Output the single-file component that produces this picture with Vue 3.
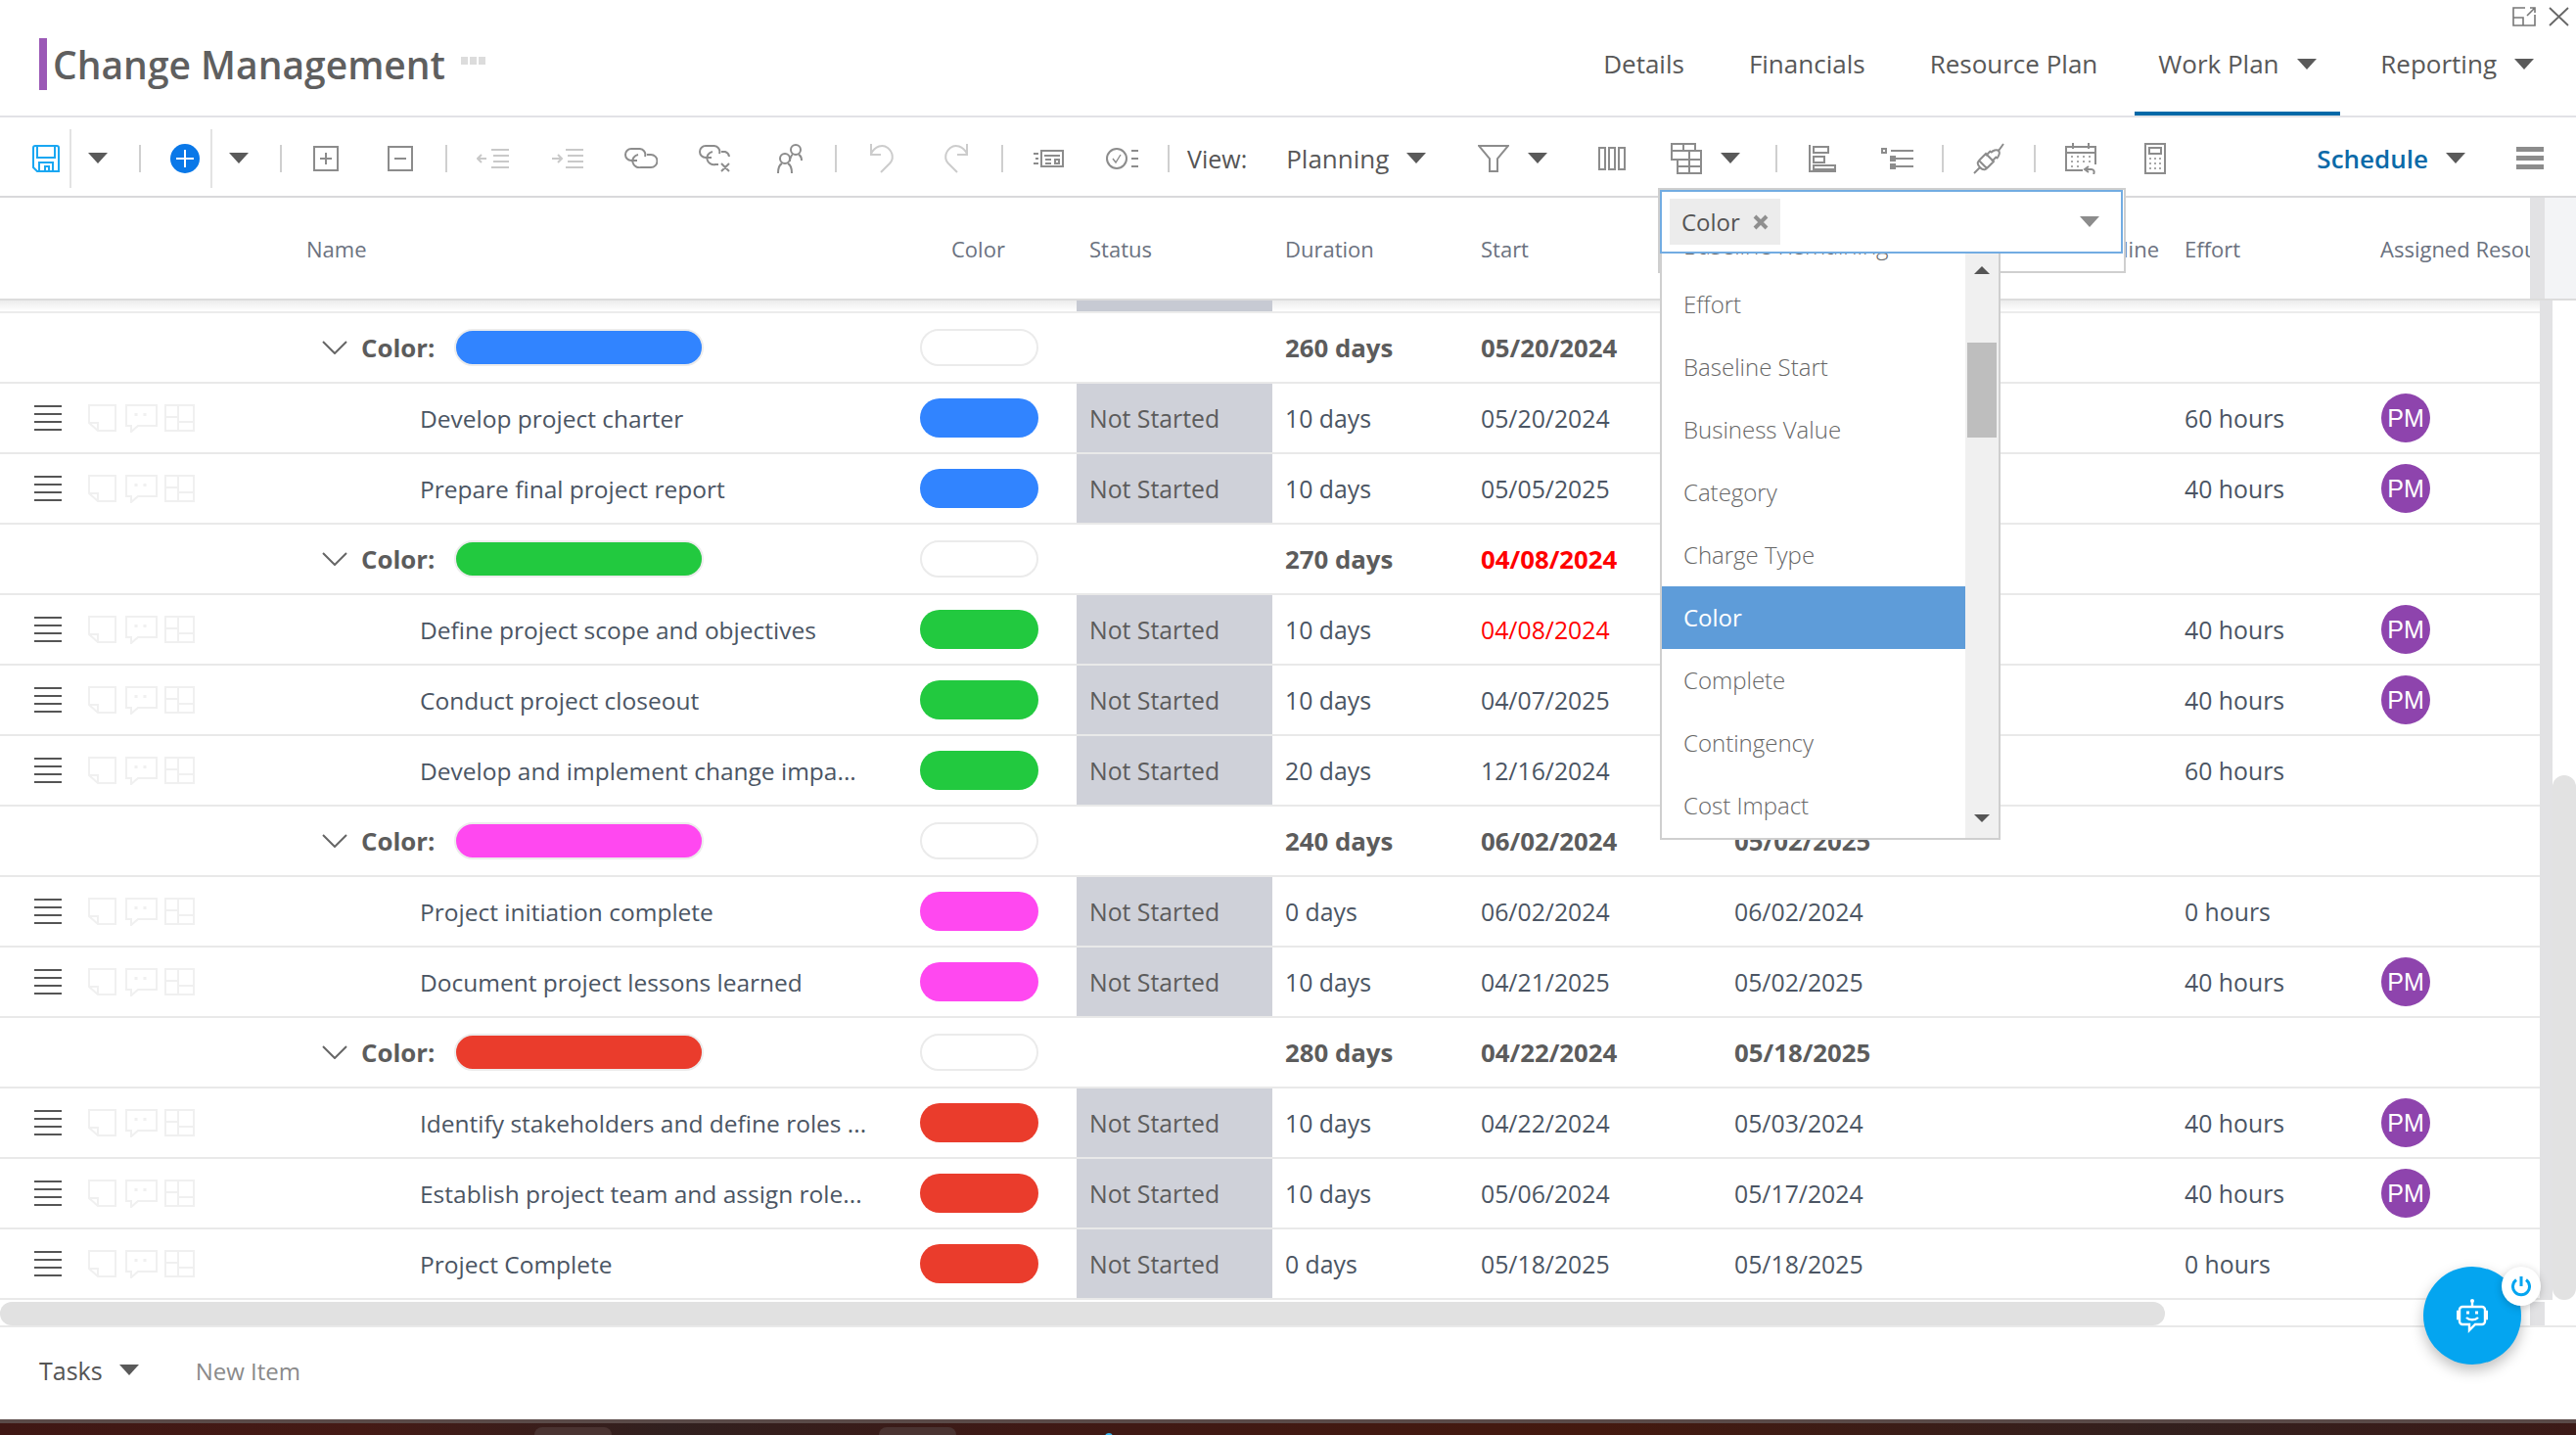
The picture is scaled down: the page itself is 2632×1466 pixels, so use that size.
<template>
  <div class="page">
    <header class="top">
      <div class="brand">
        <span class="brand-bar"></span>
        <h1 class="title">Change Management</h1>
        <span class="dots"><i></i><i></i><i></i></span>
      </div>
      <nav class="nav">
        <a class="nav-item">Details</a>
        <a class="nav-item">Financials</a>
        <a class="nav-item">Resource Plan</a>
        <a class="nav-item active">Work Plan <span class="caret"></span></a>
        <a class="nav-item last">Reporting <span class="caret"></span></a>
      </nav>
      <div class="win-btns">
        <svg width="24" height="20" viewBox="0 0 24 20" fill="none" stroke="#777" stroke-width="1.6">
          <path d="M13 1H1v18h22V8M1 11h10v8M15 9l8-8M18 1h5v5"/>
        </svg>
        <svg width="21" height="20" viewBox="0 0 21 20" fill="none" stroke="#666" stroke-width="1.8">
          <path d="M1 1l19 18M20 1L1 19"/>
        </svg>
      </div>
    </header>

    <div class="toolbar">
      <svg class="save" width="28" height="28" viewBox="0 0 28 28" fill="none" stroke="#1aa7f2" stroke-width="2">
        <path d="M1 3a2 2 0 0 1 2-2h22a2 2 0 0 1 2 2v24H5l-4-4z"/>
        <path d="M5 1v12h18V1M7 27v-9h14v9M13 27v-5h4v5"/>
      </svg>
      <span class="vsep save-sep"></span>
      <span class="caret tool-caret"></span>
      <span class="sep caret-sep"></span>
      <svg class="add" width="30" height="30" viewBox="0 0 30 30">
        <circle cx="15" cy="15" r="15" fill="#0a78e8"/>
        <path d="M15 6v18M6 15h18" stroke="#fff" stroke-width="2"/>
      </svg>
      <span class="vsep add-sep"></span>
      <span class="caret tool-caret"></span>
      <span class="sep caret-sep"></span>

      <span class="tool first-tool">
        <svg width="26" height="26" viewBox="0 0 26 26" fill="none" stroke="#8c8c8c" stroke-width="2"><path d="M1 1h24v24H1zM13 7v12M7 13h12"/></svg>
      </span>
      <span class="tool">
        <svg width="26" height="26" viewBox="0 0 26 26" fill="none" stroke="#8c8c8c" stroke-width="2"><path d="M1 1h24v24H1zM7 13h12"/></svg>
      </span>
      <span class="sep"></span>
      <span class="tool">
        <svg width="33" height="20" viewBox="0 0 33 20" fill="none" stroke="#c9c9c9" stroke-width="2"><path d="M15 1h18M17 7h16M17 13h16M15 19h18M10 10H1M5 6l-4 4 4 4"/></svg>
      </span>
      <span class="tool">
        <svg width="33" height="20" viewBox="0 0 33 20" fill="none" stroke="#c9c9c9" stroke-width="2"><path d="M15 1h18M17 7h16M17 13h16M15 19h18M1 10h9M7 6l4 4-4 4"/></svg>
      </span>
      <span class="tool">
        <svg width="34" height="21" viewBox="0 0 34 21" fill="none" stroke="#8c8c8c" stroke-width="2"><path d="M13 13H7A6 6 0 0 1 7 1h8a6 6 0 0 1 6 8"/><path d="M23 7h4a6.500 6.500 0 0 1 0 13H17a7 6.500 0 0 1-3-13"/></svg>
      </span>
      <span class="tool">
        <svg width="34" height="28" viewBox="0 0 34 28" fill="none" stroke="#8c8c8c" stroke-width="2"><path d="M13 13H7A6 6 0 0 1 7 1h8a6 6 0 0 1 6 8"/><path d="M23 7h4a6 6 0 0 1 4 5M20 20h-3a7 6.500 0 0 1-3-13M23 19l8 8M31 19l-8 8"/></svg>
      </span>
      <span class="tool">
        <svg width="29" height="30" viewBox="0 0 29 30" fill="none" stroke="#8c8c8c" stroke-width="2"><circle cx="20" cy="6" r="5"/><path d="M14 18c0-4 2-7 3-7M26 17c0-3-1-5-3-6"/><circle cx="9" cy="15" r="5"/><path d="M2 30c0-6 2-9 4-10M16 30c0-6-2-9-4-10"/></svg>
      </span>
      <span class="sep"></span>
      <span class="tool">
        <svg width="26" height="31" viewBox="0 0 26 31" fill="none" stroke="#cccccc" stroke-width="2"><path d="M2 1v11h10M2 11c4-8 12-10 17-6 6 5 6 12 2 16l-9 9"/></svg>
      </span>
      <span class="tool">
        <svg width="26" height="31" viewBox="0 0 26 31" fill="none" stroke="#cccccc" stroke-width="2"><path d="M24 1v11H14M24 11c-4-8-12-10-17-6-6 5-6 12-2 16l9 9"/></svg>
      </span>
      <span class="sep"></span>
      <span class="tool">
        <svg width="32" height="18" viewBox="0 0 32 18" fill="none" stroke="#8c8c8c" stroke-width="2"><path d="M9 1h22v16H9zM12 6h16M13 10h6M13 14h6M23 10h4v4h-4zM1 4h5M3 9h3M1 14h5"/></svg>
      </span>
      <span class="tool">
        <svg width="34" height="22" viewBox="0 0 34 22" fill="none" stroke="#8c8c8c" stroke-width="2"><circle cx="11" cy="11" r="10"/><path d="M7 11l3 4 5-8" stroke-width="1.400"/><path d="M26 3h7M26 11h7M26 19h7"/></svg>
      </span>
      <span class="sep"></span>

      <span class="tb-label">View:</span>
      <span class="tb-select">Planning</span>
      <span class="caret planning-caret"></span>
      <span class="tool filter-tool">
        <svg width="32" height="28" viewBox="0 0 32 28" fill="none" stroke="#8c8c8c" stroke-width="2"><path d="M1 1h30L20 14v13h-8V14z"/></svg>
      </span>
      <span class="caret after-tool"></span>
      <span class="tool columns-tool">
        <svg width="28" height="24" viewBox="0 0 28 24" fill="none" stroke="#8c8c8c" stroke-width="2"><path d="M1 1h6v22H1zM11 1h6v22h-6zM21 1h6v22h-6z"/></svg>
      </span>
      <span class="tool">
        <svg width="32" height="32" viewBox="0 0 32 32" fill="none" stroke="#8c8c8c" stroke-width="2"><path d="M1 1h24v7H1zM1 8v9h30M7 17v14h24V8H25M19 8v23M7 24h24M13 1v7"/></svg>
      </span>
      <span class="caret after-tool"></span>
      <span class="sep grid-sep"></span>
      <span class="tool">
        <svg width="28" height="28" viewBox="0 0 28 28" fill="none" stroke="#8c8c8c" stroke-width="2"><path d="M1 0v27h27M5 2h15v6H5zM5 12h11v6H5zM5 21h22v4H5z"/></svg>
      </span>
      <span class="tool">
        <svg width="33" height="22" viewBox="0 0 33 22" fill="none" stroke="#8c8c8c" stroke-width="2"><path d="M1 1h4v4H1zM10 3h23M10 11h23M10 19h23M10 9h4v4h-4zM10 17h4v4h-4z"/></svg>
      </span>
      <span class="sep"></span>
      <span class="tool">
        <svg width="32" height="32" viewBox="0 0 32 32" fill="none" stroke="#8c8c8c" stroke-width="2"><path d="M1 31l6-6M7 25c-4-4-2-6 0-8l6-6 8 8-6 6c-2 2-4 4-8 0zM6 18l8 8M13 13l5-5M19 19l5-5M18 10c2-2 6-4 8-2s0 6-2 8M26 8l5-7"/></svg>
      </span>
      <span class="sep"></span>
      <span class="tool">
        <svg width="32" height="32" viewBox="0 0 32 32" fill="none" stroke="#8c8c8c" stroke-width="2"><path d="M18 28H1V4h30v18M1 10h30M8 0v6M24 0v6"/><path d="M6 14h2M12 14h2M18 14h2M24 14h2M6 19h2M12 19h2M18 19h2M24 19h2M6 24h2M12 24h2" stroke-width="1.600"/><path d="M24 24l-4 3 4 3M20 27h7c3 0 3 3 2 5"/></svg>
      </span>
      <span class="tool">
        <svg width="22" height="32" viewBox="0 0 22 32" fill="none" stroke="#8c8c8c" stroke-width="2"><path d="M1 1h20v30H1zM5 5h12v6H5z"/><path d="M5 16h2M10 16h2M15 16h2M5 21h2M10 21h2M15 21h2M5 26h2M10 26h2M15 26h2" stroke-width="1.600"/></svg>
      </span>

      <span class="schedule">Schedule</span>
      <span class="caret schedule-caret"></span>
      <span class="menu-bars"><i></i><i></i><i></i></span>
    </div>

    <div class="thead">
      <div class="cols thead-cols">
        <span class="col-name">Name</span>
        <span class="col-color">Color</span>
        <span class="cell">Status</span>
        <span class="cell">Duration</span>
        <span class="cell">Start</span>
        <span class="cell hidden-col">Baseline</span>
        <span class="cell">Effort</span>
        <span class="cell clip-col">Assigned Resources</span>
      </div>
      <span class="thead-gutter"></span>
    </div>

    <div class="content">
      <div class="table">
        <div class="strip"><span class="strip-status"></span></div>
        <div v-for="row in rows" :key="row.id" class="cols row" :class="{ group: row.group }">
          <template v-if="row.group">
            <div class="group-head">
              <svg class="chevron" width="26" height="14" viewBox="0 0 26 14" fill="none" stroke="#666" stroke-width="2"><path d="M1 1l12 12L25 1"/></svg>
              <span class="group-label">Color:</span>
              <span class="group-pill" :style="{ background: row.color }"></span>
            </div>
            <div class="cell-color"><span class="pill empty"></span></div>
            <div></div>
          </template>
          <template v-else>
            <div class="row-tools">
              <span class="handle"><i></i><i></i><i></i><i></i></span>
              <svg width="29" height="28" viewBox="0 0 29 28" fill="none" stroke="#f0f0f0" stroke-width="2"><path d="M1 1h27v26H10l-9-8zM1 19h9v8"/></svg>
              <svg width="33" height="29" viewBox="0 0 33 29" fill="none" stroke="#f0f0f0" stroke-width="2"><path d="M1 1h31v21H13l-7 6v-6H1z"/><path d="M11 9v3M20 9v3" stroke-width="3"/></svg>
              <svg class="grid-icon" width="31" height="28" viewBox="0 0 31 28" fill="none" stroke="#f0f0f0" stroke-width="2"><path d="M1 1h29v26H1zM14 1v26M1 13h13M14 18h16"/></svg>
              <span class="row-name">{{ row.name }}</span>
            </div>
            <div class="cell-color"><span class="pill" :style="{ background: row.color }"></span></div>
            <div class="status">Not Started</div>
          </template>
          <div class="cell">{{ row.duration }}</div>
          <div class="cell" :class="{ late: row.late }">{{ row.start }}</div>
          <div class="cell">{{ row.finish }}</div>
          <div class="cell">{{ row.effort }}</div>
          <div class="cell">
            <span v-if="row.pm" class="avatar">PM</span>
          </div>
        </div>
      </div>
      <div class="v-track"></div>
      <div class="v-rail"><div class="v-thumb"></div></div>
    </div>

    <div class="h-scroll">
      <div class="h-thumb"></div>
      <div class="h-stub"></div>
    </div>

    <footer class="foot">
      <span class="tasks">Tasks</span>
      <span class="caret tasks-caret"></span>
      <span class="new-item">New Item</span>
    </footer>

    <div class="desktop">
      <span class="dock-tab"></span>
      <span class="dock-tab second"></span>
      <span class="dock-dot"></span>
    </div>

    <!-- group by dropdown, open over the grid -->
    <div class="dd-back"></div>
    <div class="dd-list">
      <div class="dd-items">
        <div v-for="opt in options" :key="opt" class="dd-item" :class="{ selected: opt === 'Color' }">{{ opt }}</div>
      </div>
      <div class="dd-scroll">
        <span class="arrow-up"></span>
        <span class="dd-thumb"></span>
        <span class="arrow-down"></span>
      </div>
    </div>
    <div class="dd-box">
      <span class="chip">Color
        <svg width="16" height="16" viewBox="0 0 16 16" stroke="#8f8f8f" stroke-width="4"><path d="M2 2l12 12M14 2L2 14"/></svg>
      </span>
      <span class="dd-caret"></span>
    </div>

    <div class="bot">
      <svg width="32" height="36" viewBox="0 0 32 36" fill="none" stroke="#fff" stroke-width="2.400">
        <circle cx="16" cy="3" r="2" fill="#fff" stroke="none"/>
        <path d="M16 4v5M6 9h20a3 3 0 0 1 3 3v12a3 3 0 0 1-3 3H19l-6 6v-6H6a3 3 0 0 1-3-3V12a3 3 0 0 1 3-3z"/>
        <path d="M3 14H1v7h2M29 14h2v7h-2M10 20c3 3 9 3 12 0"/>
        <path d="M10 15h3M19 15h3" stroke-width="3"/>
      </svg>
      <span class="power">
        <svg width="20" height="22" viewBox="0 0 20 22" fill="none" stroke="#04a5f0" stroke-width="3"><path d="M10 1v10M5 4.500a8.500 8.500 0 1 0 10 0"/></svg>
      </span>
    </div>
  </div>
</template>

<script setup>
const BLUE = '#3184ff'
const GREEN = '#22c93f'
const PINK = '#ff48f0'
const RED = '#ea3c2c'

const task = (id, name, color, duration, start, finish, effort, pm, late) => ({
  id, name, color, duration, start, finish, effort, pm, late
})
const group = (id, color, duration, start, finish, late) => ({
  id, group: true, color, duration, start, finish, late, effort: ''
})

const rows = [
  group(1, BLUE, '260 days', '05/20/2024', ''),
  task(2, 'Develop project charter', BLUE, '10 days', '05/20/2024', '', '60 hours', true),
  task(3, 'Prepare final project report', BLUE, '10 days', '05/05/2025', '', '40 hours', true),
  group(4, GREEN, '270 days', '04/08/2024', '', true),
  task(5, 'Define project scope and objectives', GREEN, '10 days', '04/08/2024', '', '40 hours', true, true),
  task(6, 'Conduct project closeout', GREEN, '10 days', '04/07/2025', '', '40 hours', true),
  task(7, 'Develop and implement change impa...', GREEN, '20 days', '12/16/2024', '', '60 hours', false),
  group(8, PINK, '240 days', '06/02/2024', '05/02/2025'),
  task(9, 'Project initiation complete', PINK, '0 days', '06/02/2024', '06/02/2024', '0 hours', false),
  task(10, 'Document project lessons learned', PINK, '10 days', '04/21/2025', '05/02/2025', '40 hours', true),
  group(11, RED, '280 days', '04/22/2024', '05/18/2025'),
  task(12, 'Identify stakeholders and define roles ...', RED, '10 days', '04/22/2024', '05/03/2024', '40 hours', true),
  task(13, 'Establish project team and assign role...', RED, '10 days', '05/06/2024', '05/17/2024', '40 hours', true),
  task(14, 'Project Complete', RED, '0 days', '05/18/2025', '05/18/2025', '0 hours', false)
]

const options = [
  'Baseline Remaining', 'Effort', 'Baseline Start', 'Business Value', 'Category',
  'Charge Type', 'Color', 'Complete', 'Contingency', 'Cost Impact'
]
</script>

<style>
html, body {
  margin: 0;
  background: #fff;
  overflow: hidden;
}
</style>

<style scoped>
.page {
  position: relative;
  width: 2632px;
  height: 1466px;
  display: flex;
  flex-direction: column;
  overflow: hidden;
  font-family: "Open Sans", "Liberation Sans", sans-serif;
  color: #4b5563;
  background: #fff;
}

/* header */
.top {
  position: relative;
  flex: none;
  height: 120px;
  box-sizing: border-box;
  border-bottom: 2px solid #e2e2e6;
  display: flex;
  justify-content: space-between;
}
.brand {
  display: flex;
  align-items: center;
  padding: 0 0 0 40px;
  height: 130px;
}
.brand-bar {
  width: 8px;
  height: 53px;
  background: #9b59b6;
  margin-right: 6px;
}
.title {
  margin: 0;
  font-size: 39px;
  font-weight: 600;
  color: #5f5f5f;
}
.dots {
  display: flex;
  gap: 2px;
  margin: -6px 0 0 16px;
}
.dots i {
  width: 7px;
  height: 8px;
  background: #dcdcdc;
}
.nav {
  display: flex;
  align-items: stretch;
  margin-right: 43px;
}
.nav-item {
  display: flex;
  align-items: center;
  padding: 12px 33px 0;
  font-size: 26px;
  color: #585858;
  white-space: nowrap;
}
.nav-item.active {
  box-sizing: border-box;
  width: 210px;
  border-bottom: 4px solid #0069a8;
  padding: 16px 0 0 24px;
  margin-left: 5px;
}
.nav-item.last {
  padding: 12px 0 0 41px;
}
.caret {
  display: inline-block;
  width: 0;
  height: 0;
  border-left: 10px solid transparent;
  border-right: 10px solid transparent;
  border-top: 11px solid #5a5a5a;
  margin-left: 18px;
  flex: none;
}
.win-btns {
  position: absolute;
  top: 7px;
  right: 7px;
  display: flex;
  gap: 13px;
}

/* toolbar */
.toolbar {
  flex: none;
  height: 82px;
  box-sizing: border-box;
  border-bottom: 2px solid #d9d9db;
  display: flex;
  align-items: center;
  padding: 3px 33px 0 0;
}
.toolbar .tool {
  flex: none;
  width: 76px;
  display: flex;
  justify-content: center;
  align-items: center;
}
.save { margin-left: 33px; flex: none; }
.add { margin-left: 22px; flex: none; }
.vsep {
  flex: none;
  width: 2px;
  height: 60px;
  background: #e3e3e3;
}
.save-sep { margin-left: 10px; }
.add-sep { margin-left: 11px; }
.sep {
  flex: none;
  width: 2px;
  height: 28px;
  background: #cfcfcf;
  margin: 0 8px;
}
.toolbar .caret-sep { margin-left: 32px; }
.toolbar .tool-caret { margin-left: 17px; }
.toolbar .first-tool { margin-left: -1px; }
.tb-label {
  font-size: 25px;
  margin-left: 10px;
  color: #555;
}
.tb-select {
  font-size: 26px;
  margin-left: 40px;
  color: #585858;
}
.toolbar .planning-caret { margin-left: 18px; }
.toolbar .filter-tool { margin-left: 31px; }
.toolbar .after-tool { margin-left: -3px; }
.toolbar .columns-tool { margin-left: 28px; }
.toolbar .grid-sep { margin-left: 36px; }
.schedule {
  margin-left: auto;
  font-size: 26px;
  font-weight: 600;
  color: #0a6aa8;
}
.toolbar .schedule-caret { margin-left: 18px; }
.menu-bars {
  display: flex;
  flex-direction: column;
  gap: 4px;
  margin-left: 52px;
}
.menu-bars i {
  display: block;
  width: 28px;
  height: 5px;
  background: #8c8c8c;
}

/* grid */
.thead {
  flex: none;
  height: 105px;
  box-sizing: border-box;
  border-bottom: 2px solid #dcdcdc;
  display: flex;
  background: #f3f4f6;
}
.thead-gutter {
  width: 15px;
  background: #e2e2e4;
}
.cols {
  display: grid;
  grid-template-columns: 940px 160px 200px 200px 259px 460px 200px 176px;
}
.thead-cols {
  width: 2585px;
  overflow: hidden;
  background: #fff;
  grid-template-columns: 940px 160px 200px 200px 259px 460px 200px 166px;
  align-items: center;
  font-size: 22px;
  color: #6b7280;
  white-space: nowrap;
}
.col-name { padding-left: 313px; }
.col-color { padding-left: 32px; }
.cell {
  padding-left: 13px;
  white-space: nowrap;
}
.hidden-col {
  padding: 0 13px 0 0;
  text-align: right;
}
.clip-col { overflow: hidden; }

.content {
  flex: none;
  height: 1021px;
  display: flex;
}
.table {
  width: 2595px;
  flex: none;
}
.strip {
  height: 13px;
  box-sizing: border-box;
  border-bottom: 2px solid #ececec;
  background: linear-gradient(#ececec, #fff);
}
.strip-status {
  display: block;
  width: 200px;
  height: 11px;
  margin-left: 1100px;
  background: #c7cad3;
}
.row {
  height: 72px;
  box-sizing: border-box;
  border-bottom: 2px solid #e9e9e9;
  align-items: center;
  font-size: 24.800px;
  color: #4b5563;
}
.row.group {
  font-size: 25.800px;
  font-weight: 700;
  color: #5c5c5c;
}
.row.group .late,
.late {
  color: #ff0000;
}
.group-head {
  display: flex;
  align-items: center;
  padding-left: 329px;
}
.chevron { flex: none; }
.group-label {
  margin-left: 14px;
}
.group-pill {
  box-sizing: border-box;
  width: 255px;
  height: 38px;
  margin-left: 20px;
  border-radius: 19px;
  border: 2px solid #ececec;
  background-clip: padding-box;
}
.cell-color { display: flex; }
.pill {
  width: 121px;
  height: 40px;
  border-radius: 20px;
}
.pill.empty {
  box-sizing: border-box;
  height: 38px;
  background: #fff;
  border: 2px solid #ebebeb;
}
.row-tools {
  display: flex;
  align-items: center;
  padding-left: 35px;
}
.row-tools svg { flex: none; margin-left: 9px; }
.row-tools .grid-icon { margin-left: 7px; }
.handle {
  display: flex;
  flex-direction: column;
  gap: 6px;
  margin-right: 18px;
}
.handle i {
  display: block;
  width: 28px;
  height: 2px;
  background: #555;
}
.row-name {
  margin-left: 230px;
  font-size: 24.500px;
  white-space: nowrap;
}
.status {
  align-self: stretch;
  display: flex;
  align-items: center;
  padding-left: 13px;
  background: #cfd1d9;
  color: #5c5c5c;
}
.avatar {
  display: block;
  width: 50px;
  height: 50px;
  margin-left: 1px;
  border-radius: 50%;
  background: #8e44ad;
  color: #fff;
  font: 25px/50px "Liberation Sans", sans-serif;
  text-align: center;
}
.v-track {
  width: 13px;
  flex: none;
  background: #e2e2e4;
}
.v-rail {
  flex: 1;
  padding-top: 485px;
}
.v-thumb {
  height: 536px;
  border-radius: 12px;
  background: #e2e2e2;
}
.h-scroll {
  flex: none;
  height: 28px;
  box-sizing: border-box;
  border-top: 2px solid #fff;
  border-bottom: 2px solid #e9e9e9;
  display: flex;
  justify-content: space-between;
  padding-right: 32px;
}
.h-thumb {
  width: 2212px;
  border-radius: 12px;
  background: #e1e1e1;
}
.h-stub {
  width: 15px;
  background: #e2e2e4;
}
.foot {
  flex: none;
  height: 94px;
  box-sizing: border-box;
  display: flex;
  align-items: center;
  padding: 0 0 5px 40px;
  font-size: 25px;
}
.tasks { color: #555; margin-top: -2px; }
.foot .tasks-caret { margin: -2px 0 0 17px; }
.new-item {
  margin-left: 58px;
  color: #8a8a8a;
  font-size: 24px;
}
.desktop {
  position: relative;
  flex: 1;
  overflow: hidden;
  border-top: 4px solid #5a4a48;
  background: linear-gradient(90deg, #3f1714, #451a15 14%, #31201f 26%, #3f1915 40%, #44190f 62%, #33201e 84%, #3c1a17);
}
.dock-tab {
  position: absolute;
  top: 4px;
  left: 546px;
  width: 79px;
  height: 20px;
  border-radius: 8px 8px 0 0;
  background: #4a3331;
}
.dock-tab.second { left: 898px; }
.dock-dot {
  position: absolute;
  top: 10px;
  left: 1129px;
  width: 8px;
  height: 8px;
  border-radius: 50%;
  background: #38b6f0;
}

/* dropdown over the grid */
.dd-back {
  position: absolute;
  left: 1694px;
  top: 192px;
  width: 478px;
  height: 87px;
  box-sizing: border-box;
  border: 2px solid #cfcfcf;
  background: #fff;
}
.dd-box {
  position: absolute;
  left: 1696px;
  top: 194px;
  width: 473px;
  height: 65px;
  box-sizing: border-box;
  border: 2px solid #72ace2;
  background: #fff;
  display: flex;
  align-items: center;
  justify-content: space-between;
  padding: 0 22px 0 8px;
}
.chip {
  display: flex;
  align-items: center;
  gap: 13px;
  height: 47px;
  box-sizing: border-box;
  padding: 0 12px;
  background: #ececec;
  font-size: 24px;
  color: #555;
}
.dd-caret {
  border-left: 10px solid transparent;
  border-right: 10px solid transparent;
  border-top: 11px solid #8c8c8c;
}
.dd-list {
  position: absolute;
  left: 1696px;
  top: 256px;
  width: 348px;
  height: 602px;
  box-sizing: border-box;
  border: 2px solid #cfcfcf;
  border-top: 0;
  background: #fff;
  display: flex;
  overflow: hidden;
}
.dd-items {
  flex: 1;
  margin-top: -37px;
}
.dd-item {
  height: 64px;
  line-height: 64px;
  padding-left: 22px;
  font-size: 24px;
  font-weight: 300;
  color: #666;
}
.dd-item:first-child {
  height: 60px;
}
.dd-item.selected {
  background: #5e9cd9;
  color: #fff;
  font-weight: 400;
}
.dd-scroll {
  position: relative;
  flex: none;
  width: 34px;
  background: #f0f0f0;
}
.dd-thumb {
  position: absolute;
  left: 2px;
  top: 94px;
  width: 30px;
  height: 97px;
  background: #bebebe;
}
.arrow-up,
.arrow-down {
  position: absolute;
  left: 9px;
  width: 0;
  height: 0;
  border-left: 8px solid transparent;
  border-right: 8px solid transparent;
}
.arrow-up {
  top: 16px;
  border-bottom: 8px solid #555;
}
.arrow-down {
  bottom: 16px;
  border-top: 8px solid #555;
}

/* assistant button */
.bot {
  position: absolute;
  left: 2476px;
  top: 1294px;
  width: 100px;
  height: 100px;
  border-radius: 50%;
  background: #04a5f0;
  box-shadow: 0 6px 14px rgba(0, 0, 0, 0.25);
  display: flex;
  align-items: center;
  justify-content: center;
}
.power {
  position: absolute;
  left: 80px;
  top: 0;
  width: 40px;
  height: 40px;
  border-radius: 50%;
  background: #fff;
  box-shadow: 0 2px 8px rgba(0, 0, 0, 0.2);
  display: flex;
  align-items: center;
  justify-content: center;
}
</style>
